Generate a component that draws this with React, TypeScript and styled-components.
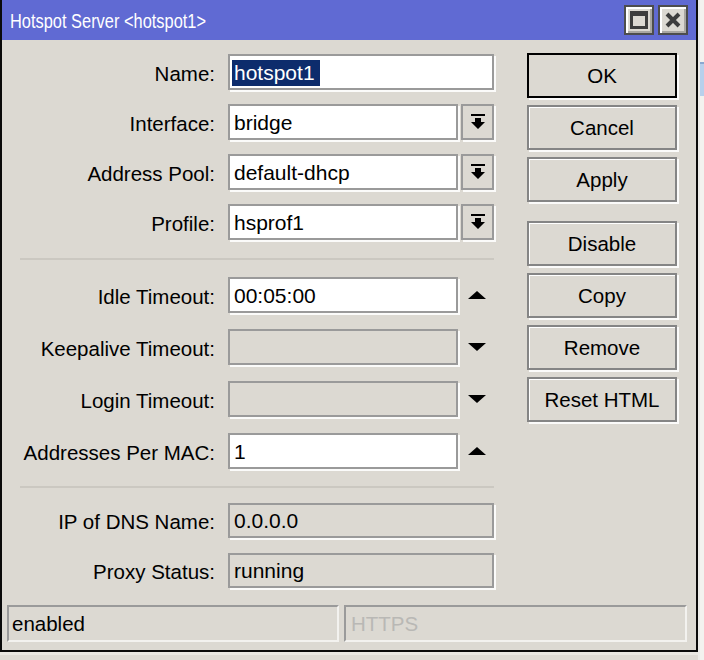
import React from "react";
import styled, { createGlobalStyle } from "styled-components";

const Global = createGlobalStyle`
  html, body { margin: 0; padding: 0; background: #dddad4; }
  body { font-family: "Liberation Sans", Arial, sans-serif; }
  * { box-sizing: border-box; }
`;

const Desktop = styled.div`
  width: 704px;
  height: 660px;
  overflow: hidden;
  display: grid;
  grid-template-columns: 698px 1fr;
  grid-template-rows: 652px 1fr;
  background: #dddad4;
`;

const SidePane = styled.div`
  grid-column: 2;
  grid-row: 1 / span 2;
  background: #f3f2ef;
  border-left: 2px solid #ecebe8;
  display: flex;
  flex-direction: column;
  padding-top: 62px;
`;

const SideRow = styled.div`
  height: 34px;
  background: #b8d0ec;
  border-top: 2px solid #8aa8d0;
`;

const BottomPane = styled.div`
  grid-column: 1;
  grid-row: 2;
  background: #dddad4;
  border-top: 3px solid #e9e7e2;
`;

const Window = styled.div`
  grid-column: 1;
  grid-row: 1;
  border: 2px solid #0a0a0a;
  border-top: none;
  background: #dcd9d2;
  display: flex;
  flex-direction: column;
  overflow: hidden;
`;

const TitleBar = styled.div`
  height: 40px;
  flex: none;
  background: #606ad3;
  display: flex;
  align-items: center;
  gap: 4px;
  padding: 0 8px 0 8px;
`;

const Title = styled.div`
  flex: 1;
  color: #fff;
  font-size: 20.5px;
  padding-top: 2px;
  white-space: nowrap;
  transform: scaleX(0.8);
  transform-origin: left center;
`;

const TitleButton = styled.div`
  width: 30px;
  height: 30px;
  background: #dcd9d2;
  border: 2px solid #4d4d4d;
  box-shadow: inset 2px 2px 0 #fff, inset -2px -2px 0 #a9a7a2;
  display: flex;
  align-items: center;
  justify-content: center;
`;

const Body = styled.div`
  flex: 1;
  display: flex;
  gap: 33px;
  padding: 13px 19px 0 18px;
`;

const Form = styled.div`
  width: 474px;
  display: flex;
  flex-direction: column;
  padding-top: 1px;
`;

const Group = styled.div<{ $gap: number }>`
  display: flex;
  flex-direction: column;
  gap: ${(p) => p.$gap}px;
`;

const Separator = styled.div<{ $before: number; $after: number }>`
  height: 2px;
  background: #cbc8c1;
  margin: ${(p) => p.$before}px 0 ${(p) => p.$after}px 0;
`;

const Row = styled.div<{ $h: number }>`
  display: grid;
  grid-template-columns: 195px 266px;
  column-gap: 13px;
  align-items: center;
  height: ${(p) => p.$h}px;
`;

const Label = styled.div`
  text-align: right;
  font-size: 20.5px;
  color: #000;
  white-space: nowrap;
  padding-top: 3px;
`;

const Control = styled.div`
  display: flex;
  align-items: stretch;
  height: 100%;
`;

const Field = styled.div<{ $readonly?: boolean; $w?: number }>`
  ${(p) => (p.$w ? `width: ${p.$w}px; flex: none;` : "flex: 1;")}
  height: 100%;
  border: 2px solid #9a9a9a;
  background: ${(p) => (p.$readonly ? "#dcd9d2" : "#fff")};
  box-shadow: 2px 2px 0 #fbfbfa;
  display: flex;
  align-items: center;
  padding: 1px 0 0 4px;
  font-size: 21px;
  color: #000;
  white-space: nowrap;
  overflow: hidden;
`;

const Selected = styled.span`
  background: #0d2c6c;
  color: #fff;
  line-height: 26px;
  padding: 0 5px 0 2px;
  margin-left: -2px;
`;

const DropButton = styled.div`
  width: 33px;
  margin-left: 3px;
  border: 2px solid #9a9a9a;
  background: #dcd9d2;
  box-shadow: 2px 2px 0 #fbfbfa;
  display: flex;
  align-items: center;
  justify-content: center;
`;

const SpinZone = styled.div`
  flex: 1;
  display: flex;
  align-items: center;
  justify-content: center;
  padding-left: 1px;
`;

const ButtonColumn = styled.div`
  width: 150px;
  display: flex;
  flex-direction: column;
  gap: 7px;
`;

const Button = styled.div<{ $default?: boolean; $spaced?: boolean }>`
  height: 45px;
  background: #dcd9d2;
  border: 2px solid ${(p) => (p.$default ? "#000" : "#858585")};
  box-shadow: ${(p) =>
    p.$default ? "2px 2px 0 #fbfbfa" : "inset 1px 1px 0 #fff, 2px 2px 0 #fbfbfa"};
  display: flex;
  align-items: center;
  justify-content: center;
  font-size: 20.5px;
  color: #000;
  margin-top: ${(p) => (p.$spaced ? 12 : 0)}px;
  padding-top: 1px;
`;

const StatusBar = styled.div`
  flex: none;
  display: grid;
  grid-template-columns: 332px 1fr;
  gap: 5px;
  padding: 0 9px 8px 5px;
  height: 45px;
`;

const StatusCell = styled.div<{ $dim?: boolean }>`
  border-top: 2px solid #9a9a9a;
  border-left: 2px solid #9a9a9a;
  border-bottom: 2px solid #f3f2ef;
  border-right: 2px solid #f3f2ef;
  display: flex;
  align-items: center;
  padding: 1px 0 0 ${(p) => (p.$dim ? 5 : 3)}px;
  font-size: 20.5px;
  color: ${(p) => (p.$dim ? "#b9b8b5" : "#000")};
`;

const MaxIcon = () => (
  <svg width="18" height="18" viewBox="0 0 18 18">
    <path d="M0 0h18v18H0z M3 5v10h12V5z" fillRule="evenodd" fill="#3d3d3d" />
  </svg>
);

const CloseIcon = () => (
  <svg width="16" height="16" viewBox="0 0 16 16">
    <path d="M2 2 L14 14 M14 2 L2 14" stroke="#3d3d3d" strokeWidth="4" />
  </svg>
);

const DropIcon = () => (
  <svg width="14" height="16" viewBox="0 0 14 16">
    <rect x="0" y="0" width="14" height="2" fill="#000" />
    <path d="M4 4h6v4h4l-7 7-7-7h4z" fill="#000" />
  </svg>
);

const UpIcon = () => (
  <svg width="18" height="8" viewBox="0 0 18 8">
    <path d="M9 0 L18 8 H0z" fill="#000" />
  </svg>
);

const DownIcon = () => (
  <svg width="18" height="8" viewBox="0 0 18 8">
    <path d="M0 0 H18 L9 8z" fill="#000" />
  </svg>
);

type ComboProps = { label: string; value: string };
const ComboRow = ({ label, value }: ComboProps) => (
  <Row $h={36}>
    <Label>{label}</Label>
    <Control>
      <Field>{value}</Field>
      <DropButton>
        <DropIcon />
      </DropButton>
    </Control>
  </Row>
);

type SpinProps = { label: string; value?: string; up?: boolean };
const SpinRow = ({ label, value, up }: SpinProps) => (
  <Row $h={36}>
    <Label>{label}</Label>
    <Control>
      <Field $w={230} $readonly={value === undefined}>
        {value}
      </Field>
      <SpinZone>{up ? <UpIcon /> : <DownIcon />}</SpinZone>
    </Control>
  </Row>
);

const ReadRow = ({ label, value }: ComboProps) => (
  <Row $h={35}>
    <Label>{label}</Label>
    <Control>
      <Field $readonly>{value}</Field>
    </Control>
  </Row>
);

export default function App() {
  return (
    <>
      <Global />
      <Desktop>
        <Window>
          <TitleBar>
            <Title>Hotspot Server &lt;hotspot1&gt;</Title>
            <TitleButton>
              <MaxIcon />
            </TitleButton>
            <TitleButton>
              <CloseIcon />
            </TitleButton>
          </TitleBar>
          <Body>
            <Form>
              <Group $gap={14}>
                <Row $h={36}>
                  <Label>Name:</Label>
                  <Control>
                    <Field>
                      <Selected>hotspot1</Selected>
                    </Field>
                  </Control>
                </Row>
                <ComboRow label="Interface:" value="bridge" />
                <ComboRow label="Address Pool:" value="default-dhcp" />
                <ComboRow label="Profile:" value="hsprof1" />
              </Group>
              <Separator $before={18} $after={17} />
              <Group $gap={16}>
                <SpinRow label="Idle Timeout:" value="00:05:00" up />
                <SpinRow label="Keepalive Timeout:" />
                <SpinRow label="Login Timeout:" />
                <SpinRow label="Addresses Per MAC:" value="1" up />
              </Group>
              <Separator $before={17} $after={15} />
              <Group $gap={15}>
                <ReadRow label="IP of DNS Name:" value="0.0.0.0" />
                <ReadRow label="Proxy Status:" value="running" />
              </Group>
            </Form>
            <ButtonColumn>
              <Button $default>OK</Button>
              <Button>Cancel</Button>
              <Button>Apply</Button>
              <Button $spaced>Disable</Button>
              <Button>Copy</Button>
              <Button>Remove</Button>
              <Button>Reset HTML</Button>
            </ButtonColumn>
          </Body>
          <StatusBar>
            <StatusCell>enabled</StatusCell>
            <StatusCell $dim>HTTPS</StatusCell>
          </StatusBar>
        </Window>
        <SidePane>
          <SideRow />
        </SidePane>
        <BottomPane />
      </Desktop>
    </>
  );
}
